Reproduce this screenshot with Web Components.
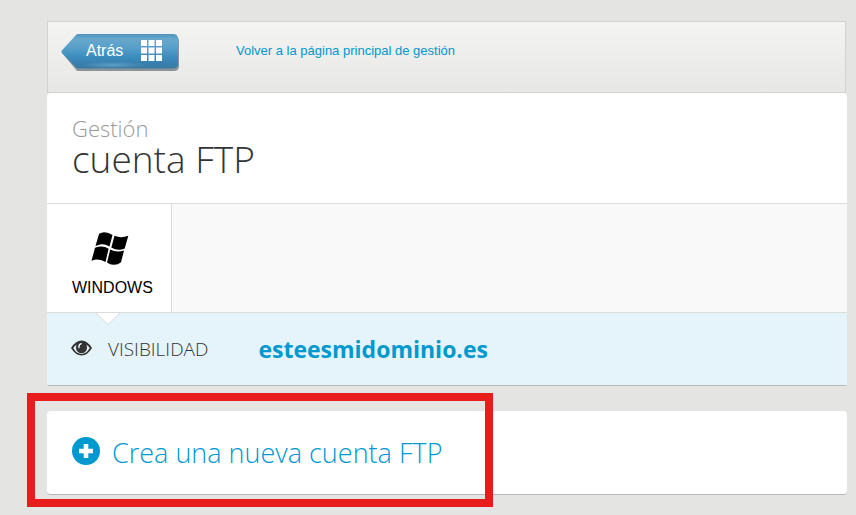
<!DOCTYPE html>
<html lang="es">
<head>
<meta charset="utf-8">
<title>Gestión cuenta FTP</title>
<style>
    body {
        margin: 0;
        background: #e4e4e2;
        font-family: "Liberation Sans", Arial, sans-serif;
        color: #333;
        --panel-font: "Open Sans", sans-serif;
        --panel-link: #0099cf;
        --panel-line: #dcdcdc;
        --panel-gutter: 25px;
    }
</style>
</head>
<body>

<panel-page>
    <panel-toolbar slot="toolbar">
        <back-button slot="back">Atrás</back-button>
        <panel-link href="#inicio">Volver a la página principal de gestión</panel-link>
    </panel-toolbar>
    <panel-card flush>
        <panel-heading section="Gestión">cuenta FTP</panel-heading>
        <panel-tabs>
            <panel-tab>WINDOWS</panel-tab>
        </panel-tabs>
        <panel-domain label="VISIBILIDAD">esteesmidominio.es</panel-domain>
    </panel-card>
    <panel-card highlight>
        <create-action>Crea una nueva cuenta FTP</create-action>
    </panel-card>
</panel-page>

<!-- Page column -->
<template id="panel-page-template">
    <style>
        :host {
            display: block;
            padding: 21px 9px 20px 47px;
        }

        main {
            display: flex;
            flex-direction: column;
            gap: 25px;
        }
    </style>
    <slot name="toolbar"></slot>
    <main><slot></slot></main>
</template>

<!-- Grey bar above the first card -->
<template id="panel-toolbar-template">
    <style>
        :host {
            display: block;
            margin-right: 1px;
        }

        nav {
            box-sizing: border-box;
            display: flex;
            align-items: flex-start;
            gap: 55px;
            height: 72px;
            padding: 12px 13px 0;
            border: 1px solid #d2d2d2;
            background: linear-gradient(#f4f4f3, #e7e7e6);
        }

        .links {
            display: flex;
            align-items: center;
            height: 32px;
        }
    </style>
    <nav>
        <slot name="back"></slot>
        <div class="links"><slot></slot></div>
    </nav>
</template>

<!-- Arrow shaped button -->
<template id="back-button-template">
    <style>
        :host {
            display: block;
        }

        button {
            position: relative;
            display: flex;
            align-items: center;
            gap: 18px;
            width: 120px;
            height: 40px;
            margin: 0;
            padding: 0 0 7px 25px;
            border: 0;
            background: none;
            color: #fff;
            font: 16px/20px "Liberation Sans", Arial, sans-serif;
            cursor: pointer;
        }

        .shape {
            position: absolute;
            top: 0;
            left: 0;
        }

        .label,
        .grid {
            position: relative;
        }
    </style>
    <button type="button">
        <svg class="shape" width="120" height="40" viewBox="0 0 120 40" aria-hidden="true">
            <defs>
                <linearGradient id="fill" x1="0" y1="0" x2="0" y2="1">
                    <stop offset="0" stop-color="#4f94be"/>
                    <stop offset="0.15" stop-color="#68a7cc"/>
                    <stop offset="0.4" stop-color="#579fc9"/>
                    <stop offset="0.65" stop-color="#3b8ebf"/>
                    <stop offset="0.86" stop-color="#387fad"/>
                    <stop offset="1" stop-color="#3b7aa3"/>
                </linearGradient>
                <radialGradient id="glow">
                    <stop offset="0" stop-color="#7ab8db" stop-opacity="0.55"/>
                    <stop offset="1" stop-color="#7ab8db" stop-opacity="0"/>
                </radialGradient>
                <filter id="soft" x="-5%" y="-10%" width="110%" height="125%">
                    <feGaussianBlur stdDeviation="0.7"/>
                </filter>
            </defs>
            <path d="M17 2H113Q118 2 118 7V32Q118 37 113 37H16L1 19Z" fill="#8d9499" filter="url(#soft)"/>
            <path d="M17 0H112Q117 0 117 5V29.500Q117 34.500 112 34.500H17Q16 34.500 15 33.500L.8 18.700Q0 17.500 .8 16.500L15 1Q16 0 17 0Z" fill="url(#fill)"/>
            <ellipse cx="52" cy="31" rx="32" ry="3.500" fill="url(#glow)"/>
        </svg>
        <span class="label"><slot></slot></span>
        <svg class="grid" width="21" height="21" viewBox="0 0 21 21" fill="#fff" aria-hidden="true">
            <path d="M0 0h6v6H0zM7.500 0h6v6h-6zM15 0h6v6h-6zM0 7.500h6v6H0zM7.500 7.500h6v6h-6zM15 7.500h6v6h-6zM0 15h6v6H0zM7.500 15h6v6h-6zM15 15h6v6h-6z"/>
        </svg>
    </button>
</template>

<template id="panel-link-template">
    <style>
        :host {
            display: block;
        }

        a {
            color: var(--panel-link);
            font-size: 13px;
            line-height: 16px;
            text-decoration: none;
        }
    </style>
    <a><slot></slot></a>
</template>

<!-- White card, optionally framed in red -->
<template id="panel-card-template">
    <style>
        :host {
            position: relative;
            display: block;
            border-bottom: 1px solid #b5b8b9;
            border-radius: 4px;
            background: #fff;
        }

        :host([flush]) {
            border-radius: 4px 4px 2px 2px;
        }

        .frame {
            display: none;
        }

        :host([highlight]) .frame {
            position: absolute;
            display: block;
            box-sizing: border-box;
            top: -18px;
            bottom: -13px;
            left: -20px;
            width: 466px;
            border: 8px solid #e81c1c;
            pointer-events: none;
        }
    </style>
    <slot></slot>
    <div class="frame"></div>
</template>

<template id="panel-heading-template">
    <style>
        :host {
            display: block;
            padding: 20px var(--panel-gutter) 28px;
            border-bottom: 1px solid var(--panel-line);
        }

        h1 {
            margin: 0;
            font-family: var(--panel-font);
            font-size: 37px;
            font-weight: 300;
            line-height: 32px;
            color: #333;
        }

        small {
            display: block;
            font-size: 22px;
            line-height: 30px;
            color: #999;
        }
    </style>
    <h1><small></small><slot></slot></h1>
</template>

<template id="panel-tabs-template">
    <style>
        :host {
            display: flex;
            border-bottom: 1px solid var(--panel-line);
            background: #f9f9f9;
        }
    </style>
    <slot></slot>
</template>

<template id="panel-tab-template">
    <style>
        :host {
            position: relative;
            display: block;
            border-right: 1px solid var(--panel-line);
            background: #fff;
        }

        button {
            display: flex;
            flex-direction: column;
            align-items: center;
            gap: 11px;
            margin: 0;
            padding: 27px 18px 14px var(--panel-gutter);
            border: 0;
            background: none;
            color: #000;
            font: 16px/20px "Liberation Sans", Arial, sans-serif;
            cursor: pointer;
        }

        .pointer {
            position: absolute;
            top: 100%;
            left: 48px;
        }
    </style>
    <button type="button">
        <svg width="42" height="36" viewBox="0 0 42 36" fill="#000" aria-hidden="true">
            <path d="M8 3Q9 1.800 13 1.300Q17.500 1.200 21.500 4L18.500 15.500Q13.500 12.500 9 13.500L4.500 15Z"/>
            <path d="M23.500 4.800Q30 7.500 37.300 4.800L33.700 17.500Q26.500 20.500 20.300 16.500Z"/>
            <path d="M4 16.800Q12 13.800 17.600 17.800L14.500 31Q8 26.500 .5 29.800Z"/>
            <path d="M19.200 18.500Q25.500 22 33 19.500L30 31.300Q27 34 22.500 33.800Q19 33.700 16 31.500Z"/>
        </svg>
        <slot></slot>
    </button>
    <svg class="pointer" width="26" height="14" viewBox="0 0 26 14" aria-hidden="true">
        <path d="M1 1L13 12.500L25 1" fill="#fff" stroke="#dcdcdc"/>
    </svg>
</template>

<template id="panel-domain-template">
    <style>
        :host {
            display: flex;
            align-items: center;
            padding: 20px 24px;
            background: #e5f4fa;
            font-family: var(--panel-font);
            line-height: 32px;
        }

        svg {
            margin-bottom: 2px;
        }

        .label {
            margin: 0 50px 0 16px;
            font-size: 19px;
            font-weight: 300;
        }

        strong {
            font-size: 23px;
            font-weight: 700;
            color: var(--panel-link);
        }
    </style>
    <svg width="21" height="16" viewBox="0 0 21 16" aria-hidden="true">
        <path d="M0 8Q4.500 .5 10.500 .5T21 8Q16.500 15.500 10.500 15.500T0 8Z" fill="#333"/>
        <path d="M2.300 8Q3.500 6 5.400 4.800Q4.300 8 5.800 10.800Q7.600 13.300 10.500 13.300T15.200 10.800Q16.700 8 15.600 4.800Q17.500 6 18.700 8Q15.500 13.900 10.500 13.900T2.300 8Z" fill="#e5f4fa"/>
        <path d="M10.800 3Q7.200 3.200 7.200 7Q7.200 8.300 8 8.400Q8.900 8.300 8.600 7Q8.600 4.600 10.800 4.300Z" fill="#e5f4fa"/>
    </svg>
    <span class="label"></span>
    <strong><slot></slot></strong>
</template>

<template id="create-action-template">
    <style>
        :host {
            display: block;
            padding: 20px var(--panel-gutter) 19px;
        }

        a {
            display: inline-flex;
            vertical-align: top;
            align-items: center;
            gap: 12px;
            color: var(--panel-link);
            font-family: var(--panel-font);
            font-size: 27px;
            font-weight: 300;
            line-height: 44px;
            text-decoration: none;
        }

        svg {
            flex: none;
            margin-bottom: 4px;
        }
    </style>
    <a href="#crear">
        <svg width="28" height="28" viewBox="0 0 28 28" aria-hidden="true">
            <circle cx="14" cy="14" r="14" fill="#0099cf"/>
            <path d="M11.700 7h4.600v4.700H21v4.600h-4.700V21h-4.600v-4.700H7v-4.600h4.700z" fill="#fff"/>
        </svg>
        <span><slot></slot></span>
    </a>
</template>

<script>
    // Shared base: clones the template named after the element
    class PanelElement extends HTMLElement {
        constructor() {
            super();

            this.attachShadow({mode: 'open'});

            const template = document.getElementById(this.localName + '-template');
            this.shadowRoot.appendChild(template.content.cloneNode(true));
        }
    }

    class PanelPage extends PanelElement {}
    class PanelToolbar extends PanelElement {}
    class BackButton extends PanelElement {}
    class PanelCard extends PanelElement {}
    class PanelTabs extends PanelElement {}
    class PanelTab extends PanelElement {}
    class CreateAction extends PanelElement {}

    class PanelLink extends PanelElement {
        connectedCallback() {
            this.shadowRoot.querySelector('a').href = this.getAttribute('href');
        }
    }

    class PanelHeading extends PanelElement {
        connectedCallback() {
            this.shadowRoot.querySelector('small').textContent = this.getAttribute('section');
        }
    }

    class PanelDomain extends PanelElement {
        connectedCallback() {
            this.shadowRoot.querySelector('.label').textContent = this.getAttribute('label');
        }
    }

    window.customElements.define('panel-page', PanelPage);
    window.customElements.define('panel-toolbar', PanelToolbar);
    window.customElements.define('back-button', BackButton);
    window.customElements.define('panel-link', PanelLink);
    window.customElements.define('panel-card', PanelCard);
    window.customElements.define('panel-heading', PanelHeading);
    window.customElements.define('panel-tabs', PanelTabs);
    window.customElements.define('panel-tab', PanelTab);
    window.customElements.define('panel-domain', PanelDomain);
    window.customElements.define('create-action', CreateAction);
</script>
</body>
</html>
